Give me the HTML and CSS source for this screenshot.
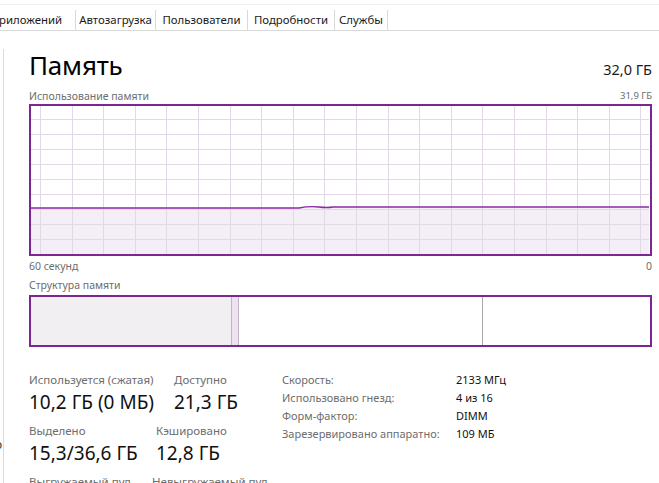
FILE: index.html
```html
<!DOCTYPE html>
<html lang="ru">
<head>
    <meta charset="UTF-8">
    <title>Память</title>
    <link rel="stylesheet" href="styles.css">
</head>
<body>
    <div class="topline"></div>
    <div class="tabs">
        <div class="tab apps">риложений</div>
        <div class="tab startup">Автозагрузка</div>
        <div class="tab users">Пользователи</div>
        <div class="tab details">Подробности</div>
        <div class="tab services">Службы</div>
    </div>

    <div class="page">
        <div class="side">о</div>
        <div class="main">
            <div class="header">
                <h1 class="title">Память</h1>
                <span class="total">32,0 ГБ</span>
            </div>

            <div class="caption">
                <span>Использование памяти</span>
                <span class="small">31,9 ГБ</span>
            </div>

            <div class="chart">
                <svg width="618" height="148" viewBox="0 0 618 148">
                    <path class="fill" d="M0 102 L268 102 Q278 100 288 101 Q296 102 302 101 L410 101 L618 101 L618 148 L0 148 Z"/>
                    <g class="grid">
                        <path d="M0 13.5 H618 M0 28.5 H618 M0 43.5 H618 M0 58.5 H618 M0 73.5 H618 M0 88.5 H618 M0 103.5 H618 M0 118.5 H618 M0 133.5 H618"/>
                        <path d="M9.5 0 V148 M41.5 0 V148 M72.5 0 V148 M104.5 0 V148 M135.5 0 V148 M167.5 0 V148 M199.5 0 V148 M230.5 0 V148 M262.5 0 V148 M293.5 0 V148 M325.5 0 V148 M357.5 0 V148 M388.5 0 V148 M420.5 0 V148 M451.5 0 V148 M483.5 0 V148 M515.5 0 V148 M546.5 0 V148 M578.5 0 V148 M609.5 0 V148"/>
                    </g>
                    <path class="line" d="M0 102 L268 102 Q278 100 288 101 Q296 102 302 101 L410 101 L618 101"/>
                </svg>
            </div>

            <div class="caption axis">
                <span>60 секунд</span>
                <span>0</span>
            </div>

            <div class="caption">
                <span>Структура памяти</span>
            </div>

            <div class="composition">
                <div class="seg inuse"></div>
                <div class="seg modified"></div>
                <div class="seg standby"></div>
                <div class="seg free"></div>
            </div>

            <div class="stats">
                <div class="big-stats">
                    <div class="stat-row">
                        <div class="stat w1">
                            <div class="label">Используется (сжатая)</div>
                            <div class="value">10,2 ГБ (0 МБ)</div>
                        </div>
                        <div class="stat">
                            <div class="label">Доступно</div>
                            <div class="value">21,3 ГБ</div>
                        </div>
                    </div>
                    <div class="stat-row">
                        <div class="stat w2">
                            <div class="label">Выделено</div>
                            <div class="value">15,3/36,6 ГБ</div>
                        </div>
                        <div class="stat">
                            <div class="label">Кэшировано</div>
                            <div class="value">12,8 ГБ</div>
                        </div>
                    </div>
                    <div class="stat-row last">
                        <div class="stat w3">
                            <div class="label">Выгружаемый пул</div>
                        </div>
                        <div class="stat">
                            <div class="label">Невыгружаемый пул</div>
                        </div>
                    </div>
                </div>

                <table class="props">
                    <tr><td class="key">Скорость:</td><td>2133 МГц</td></tr>
                    <tr><td class="key">Использовано гнезд:</td><td>4 из 16</td></tr>
                    <tr><td class="key">Форм-фактор:</td><td>DIMM</td></tr>
                    <tr><td class="key">Зарезервировано аппаратно:</td><td>109 МБ</td></tr>
                </table>
            </div>
        </div>
    </div>
</body>
</html>
```

FILE: styles.css
```css
body {
    margin: 0;
    font-family: "Noto Sans", "Open Sans", sans-serif;
    background: #fff;
    color: #000;
    overflow: hidden;
    height: 483px;
}

.topline {
    height: 4px;
    border-bottom: 1px solid #f0f0f0;
    margin-bottom: 5px;
}

.tabs {
    display: flex;
    height: 20px;
    border-bottom: 1px solid #d9d9d9;
}

.tab {
    font-size: 11.4px;
    line-height: 20px;
    border-right: 1px solid #d9d9d9;
    color: #1a1a1a;
    white-space: nowrap;
    text-align: center;
    overflow: hidden;
}

.tab.apps {
    width: 75px;
    text-align: left;
    text-indent: -1px;
}

.tab.startup {
    width: 79px;
}

.tab.users {
    width: 91px;
}

.tab.details {
    width: 86px;
}

.tab.services {
    width: 52px;
}

.page {
    display: flex;
    margin-top: 18px;
}

.side {
    width: 3px;
    overflow: hidden;
    font-size: 12px;
    color: #333;
    padding-top: 386px;
    line-height: 20px;
    text-indent: -5px;
}

.main {
    flex: 1;
    border-left: 1px solid #dcdcdc;
    padding: 0 7px 0 25px;
}

.header {
    display: flex;
    justify-content: space-between;
    align-items: baseline;
}

.title {
    margin: 0;
    font-size: 26px;
    font-weight: normal;
    line-height: 32px;
    color: #000;
    letter-spacing: -0.2px;
}

.total {
    font-size: 14.5px;
    color: #1a1a1a;
}

.caption {
    display: flex;
    justify-content: space-between;
    font-size: 10.5px;
    line-height: 14px;
    color: #6d6d6d;
    margin-top: 8px;
}

.caption .small {
    font-size: 9.5px;
}

.chart {
    margin-top: 1px;
    border: 2px solid #7e2594;
    height: 148px;
    background: #fff;
}

.chart svg {
    display: block;
}

.grid path {
    stroke: #e3d8e6;
    stroke-width: 1;
    fill: none;
}

.fill {
    fill: #f4eef6;
}

.line {
    stroke: #8a2ba3;
    stroke-width: 1.4;
    fill: none;
}

.axis {
    margin-top: 3px;
}

.caption.axis + .caption {
    margin-top: 5px;
}

.composition {
    margin-top: 3px;
    height: 48px;
    border: 2px solid #7e2594;
    display: flex;
}

.seg {
    height: 100%;
}

.inuse {
    width: 200px;
    background: #f2eff3;
    border-right: 1px solid #c2b4c6;
}

.modified {
    width: 6px;
    background: #ece2f0;
    border-right: 1px solid #c2b4c6;
}

.standby {
    width: 243px;
    border-right: 1px solid #a8a8a8;
}

.free {
    flex: 1;
}

.stats {
    display: flex;
    align-items: flex-start;
    margin-top: 24px;
}

.big-stats {
    width: 253px;
}

.stat-row {
    display: flex;
    height: 51px;
}

.stat-row.last {
    height: 18px;
}

.stat.w1 {
    width: 145px;
}

.stat.w2 {
    width: 127px;
}

.stat.w3 {
    width: 123px;
}

.label {
    font-size: 11.5px;
    line-height: 17px;
    color: #6d6d6d;
    white-space: nowrap;
}

.value {
    font-size: 19px;
    line-height: 28px;
    color: #111;
    white-space: nowrap;
}

.props {
    border-collapse: collapse;
    font-size: 11px;
    margin-top: 0;
}

.props td {
    padding: 0;
    line-height: 18px;
    white-space: nowrap;
    color: #111;
}

.props td.key {
    width: 174px;
    color: #6d6d6d;
}
```
